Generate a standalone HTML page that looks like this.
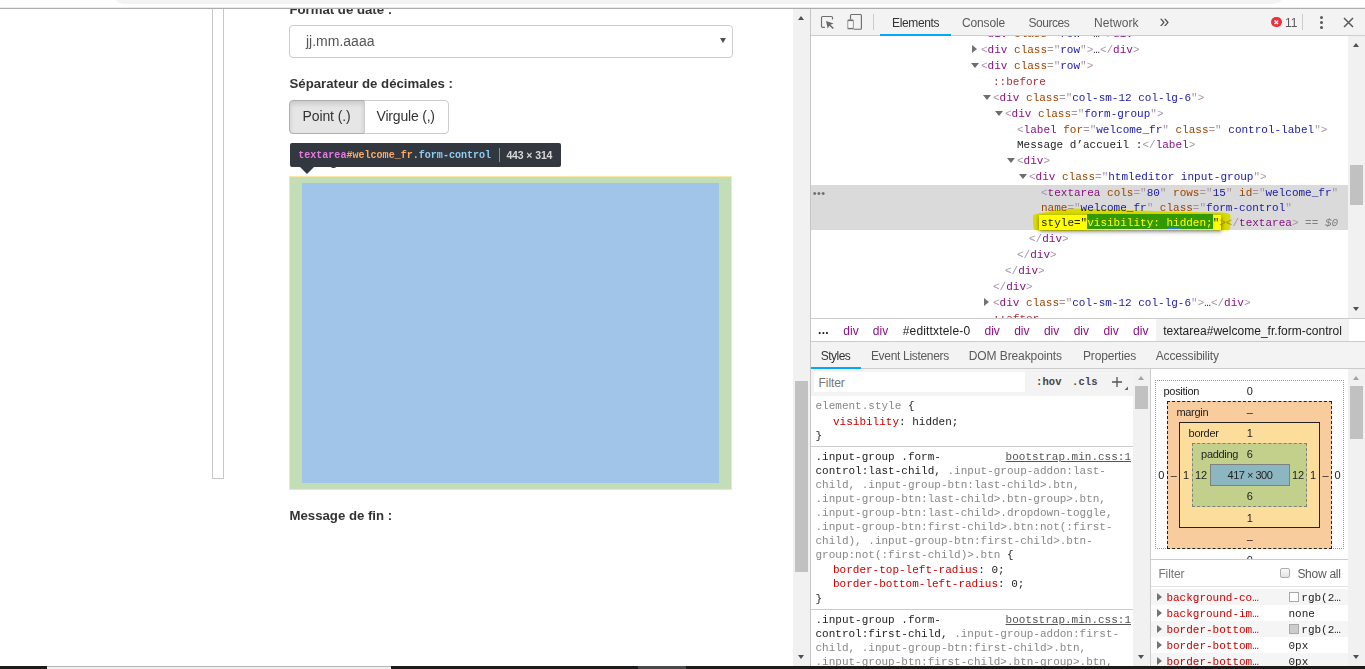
<!DOCTYPE html>
<html lang="fr">
<head>
<meta charset="utf-8">
<title>Message d'accueil</title>
<style>
*{box-sizing:border-box;margin:0;padding:0}
html,body{width:1365px;height:669px;overflow:hidden;background:#fff}
body{position:relative;font-family:"Liberation Sans",sans-serif;font-size:12px;color:#333}
.a{position:absolute}
.mono{font-family:"Liberation Mono",monospace;font-size:11px;white-space:pre}
.ui{font-family:"Liberation Sans",sans-serif;font-size:12px;color:#333;white-space:pre}
/* ---------- left page ---------- */
.lbl{font-weight:bold;font-size:13.2px;color:#333;white-space:pre;line-height:16px}
/* ---------- elements tree ---------- */
.row{position:absolute;left:811px;width:538px;height:16px;line-height:16px}
.row span.t{position:absolute;top:1px}
.tg{color:#a894a6}.tn{color:#881280}.an{color:#994500}.av{color:#1a1aa6}.ps{color:#a8323a}.tx{color:#222}
.arr{position:absolute;width:0;height:0}
.ar{border-left:5px solid #727272;border-top:4px solid transparent;border-bottom:4px solid transparent}
.ad{border-top:5.6px solid #6e6e6e;border-left:4px solid transparent;border-right:4px solid transparent;margin:1px 0 0 -0.5px}
/* ---------- styles pane ---------- */
.sel{color:#222}.dim{color:#888}.prop{color:#c80000}.val{color:#222}
.sl{position:absolute;left:815px;line-height:14px;height:14px}
</style>
</head>
<body>

<!-- ===== left page ===== -->
<div class="a" style="left:211.5px;top:9px;width:12.5px;height:470px;border:1px solid #c8c8c8;border-top:0"></div>

<div class="a lbl" style="left:289.5px;top:2px">Format de date :</div>
<div class="a" style="left:289px;top:25px;width:444px;height:33px;border:1px solid #ccc;border-radius:4px;background:#fff"></div>
<div class="a" style="left:306px;top:33px;font-size:14px;line-height:16px;color:#555;white-space:pre">jj.mm.aaaa</div>
<div class="a arr" style="left:719.6px;top:38.1px;border-top:5.6px solid #505050;border-left:3.4px solid transparent;border-right:3.4px solid transparent"></div>

<div class="a lbl" style="left:289.5px;top:76px">Séparateur de décimales :</div>

<div class="a" style="left:289px;top:100px;width:76px;height:34px;border:1px solid #adadad;border-radius:4px 0 0 4px;background:#e6e6e6;box-shadow:inset 0 3px 5px rgba(0,0,0,.125)"></div>
<div class="a" style="left:364px;top:100px;width:85px;height:34px;border:1px solid #ccc;border-radius:0 4px 4px 0;background:#fff"></div>
<div class="a" style="left:302.5px;top:108px;font-size:14px;line-height:16px;color:#333;white-space:pre;letter-spacing:-0.1px">Point (.)</div>
<div class="a" style="left:376.5px;top:108px;font-size:14px;line-height:16px;color:#333;white-space:pre;letter-spacing:-0.19px">Virgule (,)</div>

<!-- hidden label peeking under tooltip -->
<div class="a lbl" style="left:289.5px;top:153px;color:#333">Message d’accueil :</div>

<!-- inspector highlight -->
<div class="a" style="left:289px;top:176px;width:443px;height:314px;background:#c3deb7;border:1px solid #f8e7a5"></div>
<div class="a" style="left:302px;top:183px;width:417px;height:300px;background:#a0c5e8"></div>

<!-- tooltip -->
<div class="a" style="left:290px;top:143px;width:271px;height:23.5px;background:#333740;border-radius:2px"></div>
<div class="a arr" style="left:298.7px;top:166px;border-top:8.3px solid #333740;border-left:8px solid transparent;border-right:8px solid transparent"></div>
<div class="a mono" style="left:298.2px;top:148px;line-height:15px;font-weight:bold;font-size:10.05px"><span style="color:#e878e2">textarea</span><span style="color:#f9ab66">#welcome_fr</span><span style="color:#8ccff2">.form-control</span></div>
<div class="a" style="left:499px;top:148px;width:1px;height:14px;background:#8a8d93"></div>
<div class="a" style="left:506.4px;top:148px;line-height:15px;font-size:10.5px;font-weight:bold;color:#d8d8d8;white-space:pre;letter-spacing:-0.12px">443 × 314</div>

<div class="a lbl" style="left:289.5px;top:508px">Message de fin :</div>

<!-- ===== browser chrome remnants ===== -->
<div class="a" style="left:0;top:0;width:1365px;height:8px;background:#fff"></div>
<div class="a" style="left:111px;top:-20px;width:1175px;height:24px;background:#f1f3f4;border-radius:0 0 14px 14px"></div>
<div class="a" style="left:0;top:7px;width:1365px;height:2px;background:linear-gradient(#ececec,#ececec 50%,#adadad 50%)"></div>

<!-- page scrollbar -->
<div class="a" style="left:793px;top:9px;width:17px;height:657px;background:#f1f1f1"></div>
<div class="a" style="left:795px;top:381px;width:13px;height:191px;background:#c1c1c1"></div>
<div class="a arr" style="left:797.9px;top:16px;border-bottom:4px solid #505050;border-left:3.6px solid transparent;border-right:3.6px solid transparent"></div>
<div class="a arr" style="left:797.9px;top:654.5px;border-top:4px solid #505050;border-left:3.6px solid transparent;border-right:3.6px solid transparent"></div>

<!-- ===== devtools frame ===== -->
<div class="a" style="left:810px;top:9px;width:1px;height:657px;background:#c6c6c6"></div>
<div class="a" style="left:811px;top:9px;width:554px;height:27px;background:#f3f3f3;border-bottom:1px solid #cdcdcd"></div>

<!-- ===== devtools toolbar ===== -->
<svg class="a" style="left:815px;top:10px" width="60" height="24" viewBox="815 10 60 24"><path d="M832.5 19.6V17.6Q832.5 16.5 831.4 16.5H822.6Q821.5 16.5 821.5 17.6V26.3Q821.5 27.4 822.6 27.4H824.9" fill="none" stroke="#6e6e6e" stroke-width="1.15"/><path d="M826 21.1L833.6 23.4L830.4 24.8L833.9 28.1L832.8 29.1L829.4 25.8L827.7 28.6Z" fill="#6a6a6a"/><path d="M850.5 19.6V15.5Q850.5 14.5 851.5 14.5H860.4Q861.4 14.5 861.4 15.5V28.2Q861.4 29.2 860.4 29.2H853.6" fill="none" stroke="#6e6e6e" stroke-width="1.15"/><rect x="847.5" y="19.6" width="6.1" height="9.7" rx="0.9" fill="#6e6e6e"/><rect x="848.2" y="21.1" width="4.7" height="6.8" fill="#f8f8f8"/></svg>
<div class="a" style="left:873px;top:14px;width:1px;height:16px;background:#ccc"></div>
<div class="a ui" style="left:892px;top:15px;line-height:16px;letter-spacing:-0.35px">Elements</div>
<div class="a" style="left:880px;top:34px;width:71px;height:2px;background:#03a9f4"></div>
<div class="a ui" style="left:962px;top:15px;line-height:16px;letter-spacing:-0.13px;color:#5a5a5a">Console</div>
<div class="a ui" style="left:1028.5px;top:15px;line-height:16px;letter-spacing:-0.45px;color:#5a5a5a">Sources</div>
<div class="a ui" style="left:1094px;top:15px;line-height:16px;letter-spacing:0.08px;color:#5a5a5a">Network</div>
<div class="a ui" style="left:1159.5px;top:12.5px;line-height:16px;font-size:17.5px;color:#555">»</div>
<div class="a" style="left:1271px;top:16.7px;width:10.6px;height:10.6px;border-radius:6px;background:#e8333f"></div>
<svg class="a" style="left:1271px;top:16.7px" width="10.6" height="10.6" viewBox="0 0 12 12"><path d="M4 4L8 8M8 4L4 8" stroke="#fff" stroke-width="1.7"/></svg>
<div class="a ui" style="left:1285px;top:15px;line-height:16px;color:#5a5a5a">11</div>
<div class="a" style="left:1302px;top:14px;width:1px;height:16px;background:#ccc"></div>
<div class="a" style="left:1319.5px;top:16px;width:3px;height:3px;border-radius:2px;background:#5a5a5a;box-shadow:0 5px 0 #5a5a5a,0 10px 0 #5a5a5a"></div>
<svg class="a" style="left:1343px;top:17px" width="11" height="11" viewBox="0 0 11 11"><path d="M1 1L10 10M10 1L1 10" stroke="#5a5a5a" stroke-width="1.5"/></svg>


<!-- ===== elements tree ===== -->
<div class="a" style="left:811px;top:36px;width:554px;height:284px;overflow:hidden;background:#fff"><div style="position:absolute;left:-811px;top:-36px;width:1365px;height:400px">
<div class="a" style="left:811px;top:185px;width:538px;height:45px;background:#dadada"></div>
<div class="a" style="left:1038.5px;top:214.5px;width:182.5px;height:15px;background:#fff;box-shadow:0 1px 3px rgba(0,0,0,.35),1px 2px 5px rgba(0,0,0,.25)"></div>
<div class="a" style="left:1087px;top:214.2px;width:126px;height:15px;background:#3399ff"></div>
<div class="a ui" style="left:812.8px;top:185px;line-height:16px;color:#6e6e6e;letter-spacing:0.35px;font-size:11px">•••</div>
<div class="row mono" style="top:25px"><span class="t" style="left:170px"><span class="tg">&lt;</span><span class="tn">div</span> <span class="an">class</span><span class="tg">="</span><span class="av">row</span><span class="tg">"</span><span class="tg">&gt;</span><span class="tx">…</span><span class="tg">&lt;/</span><span class="tn">div</span><span class="tg">&gt;</span></span></div>
<div class="row mono" style="top:41px"><i class="arr ar" style="left:161px;top:4px"></i><span class="t" style="left:170px"><span class="tg">&lt;</span><span class="tn">div</span> <span class="an">class</span><span class="tg">="</span><span class="av">row</span><span class="tg">"</span><span class="tg">&gt;</span><span class="tx">…</span><span class="tg">&lt;/</span><span class="tn">div</span><span class="tg">&gt;</span></span></div>
<div class="row mono" style="top:57px"><i class="arr ad" style="left:160px;top:5px"></i><span class="t" style="left:170px"><span class="tg">&lt;</span><span class="tn">div</span> <span class="an">class</span><span class="tg">="</span><span class="av">row</span><span class="tg">"</span><span class="tg">&gt;</span></span></div>
<div class="row mono" style="top:73px"><span class="t" style="left:182px"><span class="ps">::before</span></span></div>
<div class="row mono" style="top:89px"><i class="arr ad" style="left:172px;top:5px"></i><span class="t" style="left:182px"><span class="tg">&lt;</span><span class="tn">div</span> <span class="an">class</span><span class="tg">="</span><span class="av">col-sm-12 col-lg-6</span><span class="tg">"</span><span class="tg">&gt;</span></span></div>
<div class="row mono" style="top:105px"><i class="arr ad" style="left:184px;top:5px"></i><span class="t" style="left:194px"><span class="tg">&lt;</span><span class="tn">div</span> <span class="an">class</span><span class="tg">="</span><span class="av">form-group</span><span class="tg">"</span><span class="tg">&gt;</span></span></div>
<div class="row mono" style="top:121px"><span class="t" style="left:206px"><span class="tg">&lt;</span><span class="tn">label</span> <span class="an">for</span><span class="tg">="</span><span class="av">welcome_fr</span><span class="tg">"</span> <span class="an">class</span><span class="tg">="</span><span class="av"> control-label</span><span class="tg">"</span><span class="tg">&gt;</span></span></div>
<div class="row mono" style="top:136px"><span class="t" style="left:206px"><span class="tx">Message d’accueil :</span><span class="tg">&lt;/</span><span class="tn">label</span><span class="tg">&gt;</span></span></div>
<div class="row mono" style="top:152px"><i class="arr ad" style="left:196px;top:5px"></i><span class="t" style="left:206px"><span class="tg">&lt;</span><span class="tn">div</span><span class="tg">&gt;</span></span></div>
<div class="row mono" style="top:168px"><i class="arr ad" style="left:208px;top:5px"></i><span class="t" style="left:218px"><span class="tg">&lt;</span><span class="tn">div</span> <span class="an">class</span><span class="tg">="</span><span class="av">htmleditor input-group</span><span class="tg">"</span><span class="tg">&gt;</span></span></div>
<div class="row mono" style="top:185px;height:15px;line-height:15px"><span class="t" style="left:230px"><span class="tg">&lt;</span><span class="tn">textarea</span> <span class="an">cols</span><span class="tg">="</span><span class="av">80</span><span class="tg">"</span> <span class="an">rows</span><span class="tg">="</span><span class="av">15</span><span class="tg">"</span> <span class="an">id</span><span class="tg">="</span><span class="av">welcome_fr</span><span class="tg">"</span></span></div>
<div class="row mono" style="top:200px;height:15px;line-height:15px"><span class="t" style="left:230px"><span class="an">name</span><span class="tg">="</span><span class="av">welcome_fr</span><span class="tg">"</span> <span class="an">class</span><span class="tg">="</span><span class="av">form-control</span><span class="tg">"</span></span></div>
<div class="row mono" style="top:215px;height:15px;line-height:15px"><span class="t" style="left:230px"><span style="color:#222">style="</span><span style="color:#fff">visibility: hidden;</span><span style="color:#222">"</span><span class="tg">&gt;&lt;/</span><span class="tn">textarea</span><span class="tg">&gt;</span><span style="color:#808080"> == <i>$0</i></span></span></div>
<div class="row mono" style="top:230px"><span class="t" style="left:218px"><span class="tg">&lt;/</span><span class="tn">div</span><span class="tg">&gt;</span></span></div>
<div class="row mono" style="top:246px"><span class="t" style="left:206px"><span class="tg">&lt;/</span><span class="tn">div</span><span class="tg">&gt;</span></span></div>
<div class="row mono" style="top:262px"><span class="t" style="left:194px"><span class="tg">&lt;/</span><span class="tn">div</span><span class="tg">&gt;</span></span></div>
<div class="row mono" style="top:278px"><span class="t" style="left:182px"><span class="tg">&lt;/</span><span class="tn">div</span><span class="tg">&gt;</span></span></div>
<div class="row mono" style="top:294px"><i class="arr ar" style="left:173px;top:4px"></i><span class="t" style="left:182px"><span class="tg">&lt;</span><span class="tn">div</span> <span class="an">class</span><span class="tg">="</span><span class="av">col-sm-12 col-lg-6</span><span class="tg">"</span><span class="tg">&gt;</span><span class="tx">…</span><span class="tg">&lt;/</span><span class="tn">div</span><span class="tg">&gt;</span></span></div>
<div class="row mono" style="top:310px"><span class="t" style="left:182px"><span class="ps">::after</span></span></div>
</div></div>
<svg class="a" style="left:1025px;top:200px;mix-blend-mode:multiply" width="215" height="40" viewBox="1025 200 215 40"><path d="M1033.2 215 Q1036 213.6 1040 213.2 L1047 212 Q1055 210 1062 209.2 L1075 208.6 L1090 209 L1110 209.6 L1140 210.6 L1170 211.6 L1200 212.2 L1222 212.6 Q1229 212.8 1230.3 215 L1230.6 221 L1230.2 227.5 Q1230 230.2 1227 230.5 L1200 230.3 L1150 230.1 L1100 230.5 L1060 231 L1037 230.6 Q1033.6 230.4 1033.4 227 L1033 220 Z" fill="#ffff00"/></svg>
<div class="a" style="left:1168px;top:228px;width:12px;height:1px;background:#2f7fe6"></div>
<div class="a" style="left:1058px;top:229px;width:10px;height:1px;background:#fdfdf0"></div>
<div class="a" style="left:1117px;top:229px;width:36px;height:1px;background:#fdfdf0"></div>
<!-- tree scrollbar -->
<div class="a" style="left:1348px;top:36px;width:17px;height:283px;background:#f1f1f1"></div>
<div class="a" style="left:1350px;top:165px;width:13px;height:39.6px;background:#c1c1c1"></div>
<div class="a arr" style="left:1352.9px;top:43px;border-bottom:4px solid #505050;border-left:3.6px solid transparent;border-right:3.6px solid transparent"></div>
<div class="a arr" style="left:1352.9px;top:307px;border-top:4px solid #505050;border-left:3.6px solid transparent;border-right:3.6px solid transparent"></div>


<!-- ===== breadcrumbs ===== -->
<div class="a" style="left:811px;top:318px;width:554px;height:24px;background:#fff;border-top:1px solid #ccc;border-bottom:1px solid #ccc"></div>
<div class="a" style="left:1156px;top:319px;width:193px;height:22px;background:#f2f2f2"></div>
<div class="a ui" style="left:818px;top:322px;line-height:16px;font-weight:bold;color:#222;letter-spacing:0.3px">...</div>
<div class="a ui" style="left:843.3px;top:323px;line-height:16px;color:#881280">div</div>
<div class="a ui" style="left:872.8px;top:323px;line-height:16px;color:#881280">div</div>
<div class="a ui" style="left:902.7px;top:323px;line-height:16px;color:#222;letter-spacing:0.17px">#edittxtele-0</div>
<div class="a ui" style="left:984.5px;top:323px;line-height:16px;color:#881280">div</div>
<div class="a ui" style="left:1014.2px;top:323px;line-height:16px;color:#881280">div</div>
<div class="a ui" style="left:1043.9px;top:323px;line-height:16px;color:#881280">div</div>
<div class="a ui" style="left:1073.7px;top:323px;line-height:16px;color:#881280">div</div>
<div class="a ui" style="left:1103.4px;top:323px;line-height:16px;color:#881280">div</div>
<div class="a ui" style="left:1133.1px;top:323px;line-height:16px;color:#881280">div</div>
<div class="a ui" style="left:1163.2px;top:323px;line-height:16px;color:#222;letter-spacing:0.02px">textarea#welcome_fr.form-control</div>


<!-- ===== styles sidebar tabs ===== -->
<div class="a" style="left:811px;top:342px;width:554px;height:27px;background:#f3f3f3;border-bottom:1px solid #ccc"></div>
<div class="a ui" style="left:820.7px;top:348px;line-height:16px;letter-spacing:-0.5px">Styles</div>
<div class="a" style="left:811px;top:367px;width:50px;height:2px;background:#03a9f4"></div>
<div class="a ui" style="left:870.9px;top:348px;line-height:16px;letter-spacing:-0.31px;color:#5a5a5a">Event Listeners</div>
<div class="a ui" style="left:968.8px;top:348px;line-height:16px;letter-spacing:-0.1px;color:#5a5a5a">DOM Breakpoints</div>
<div class="a ui" style="left:1083px;top:348px;line-height:16px;letter-spacing:-0.17px;color:#5a5a5a">Properties</div>
<div class="a ui" style="left:1155.8px;top:348px;line-height:16px;letter-spacing:-0.18px;color:#5a5a5a">Accessibility</div>
<!-- ===== styles pane ===== -->
<div class="a" style="left:811px;top:369px;width:339px;height:297px;background:#fff"></div>
<div class="a" style="left:811px;top:369px;width:322px;height:27px;background:#f3f3f3"></div>
<div class="a" style="left:814px;top:372px;width:211px;height:20px;background:#fff"></div>
<div class="a ui" style="left:818.6px;top:375px;line-height:16px;color:#757575;letter-spacing:-0.1px">Filter</div>
<div class="a mono" style="left:1036px;top:374px;line-height:16px;color:#444;font-weight:bold;font-size:10.5px;letter-spacing:0.1px">:hov</div>
<div class="a mono" style="left:1072px;top:374px;line-height:16px;color:#444;font-weight:bold;font-size:10.5px;letter-spacing:0.1px">.cls</div>
<svg class="a" style="left:1111px;top:376px" width="18" height="16" viewBox="0 0 18 16"><path d="M6 1V11M1 6H11" stroke="#555" stroke-width="1.3" fill="none"/><path d="M17 10.5V14H13.5Z" fill="#666"/></svg>
<div class="sl mono" style="top:398.5px;left:815.5px"><span class="dim">element.style</span> <span class="sel">{</span></div>
<div class="sl mono" style="top:415px;left:833px"><span class="prop">visibility</span><span class="val">: hidden;</span></div>
<div class="sl mono" style="top:428.5px;left:815.5px"><span class="sel">}</span></div>
<div class="a" style="left:811px;top:445.5px;width:322px;height:1px;background:#ccc"></div>
<div class="sl mono" style="top:449.5px;left:815.5px"><span class="sel">.input-group .form-</span></div>
<div class="sl mono" style="top:463.5px;left:815.5px"><span class="sel">control:last-child,</span><span class="dim"> .input-group-addon:last-</span></div>
<div class="sl mono" style="top:477.5px;left:815.5px"><span class="dim">child, .input-group-btn:last-child&gt;.btn,</span></div>
<div class="sl mono" style="top:491.5px;left:815.5px"><span class="dim">.input-group-btn:last-child&gt;.btn-group&gt;.btn,</span></div>
<div class="sl mono" style="top:505.5px;left:815.5px"><span class="dim">.input-group-btn:last-child&gt;.dropdown-toggle,</span></div>
<div class="sl mono" style="top:519.5px;left:815.5px"><span class="dim">.input-group-btn:first-child&gt;.btn:not(:first-</span></div>
<div class="sl mono" style="top:533.5px;left:815.5px"><span class="dim">child), .input-group-btn:first-child&gt;.btn-</span></div>
<div class="sl mono" style="top:547.5px;left:815.5px"><span class="dim">group:not(:first-child)&gt;.btn</span> <span class="sel">{</span></div>
<div class="sl mono" style="top:449.5px;left:auto;right:234px;color:#545454;text-decoration:underline">bootstrap.min.css:1</div>
<div class="sl mono" style="top:563px;left:833px"><span class="prop">border-top-left-radius</span><span class="val">: 0;</span></div>
<div class="sl mono" style="top:577px;left:833px"><span class="prop">border-bottom-left-radius</span><span class="val">: 0;</span></div>
<div class="sl mono" style="top:591.5px;left:815.5px"><span class="sel">}</span></div>
<div class="a" style="left:811px;top:608.5px;width:322px;height:1px;background:#ccc"></div>
<div class="sl mono" style="top:612.5px;left:815.5px"><span class="sel">.input-group .form-</span></div>
<div class="sl mono" style="top:626.5px;left:815.5px"><span class="sel">control:first-child,</span><span class="dim"> .input-group-addon:first-</span></div>
<div class="sl mono" style="top:640.5px;left:815.5px"><span class="dim">child, .input-group-btn:first-child&gt;.btn,</span></div>
<div class="sl mono" style="top:654.5px;left:815.5px"><span class="dim">.input-group-btn:first-child&gt;.btn-group&gt;.btn,</span></div>
<div class="sl mono" style="top:612.5px;left:auto;right:234px;color:#545454;text-decoration:underline">bootstrap.min.css:1</div>
<div class="a" style="left:1133px;top:369px;width:17px;height:297px;background:#f1f1f1"></div>
<div class="a" style="left:1135px;top:386px;width:13px;height:23px;background:#c1c1c1"></div>
<div class="a arr" style="left:1137.9px;top:376px;border-bottom:4px solid #a3a3a3;border-left:3.6px solid transparent;border-right:3.6px solid transparent"></div>
<div class="a arr" style="left:1137.9px;top:654.5px;border-top:4px solid #505050;border-left:3.6px solid transparent;border-right:3.6px solid transparent"></div>
<div class="a" style="left:1150px;top:369px;width:1px;height:297px;background:#ccc"></div>


<!-- ===== computed / box model pane ===== -->
<div class="a" style="left:1151px;top:369px;width:197px;height:297px;background:#fff"></div>
<div class="a" style="left:1151px;top:369px;width:197px;height:190px;overflow:hidden"><div style="position:absolute;left:-1151px;top:-369px;width:1365px;height:669px">
<div class="a" style="left:1155px;top:379.5px;width:188.7px;height:169px;border:1px dotted #9a9a9a"></div>
<div class="a" style="left:1167px;top:401px;width:164.7px;height:148px;background:#f9cc9d;border:1px dashed #222"></div>
<div class="a" style="left:1179px;top:422px;width:141px;height:106px;background:#fddd9b;border:1px solid #222"></div>
<div class="a" style="left:1192px;top:443px;width:115px;height:64px;background:#c3d08b;border:1px dashed #808080"></div>
<div class="a" style="left:1210px;top:464px;width:80px;height:22px;background:#8cb6c0;border:1px solid #808080"></div>
<div class="a ui" style="left:1163.5px;top:384.2px;line-height:14px;font-size:11px;color:#222;letter-spacing:-0.3px">position</div>
<div class="a ui" style="left:1249.7px;top:384.2px;line-height:14px;font-size:11px;color:#222;letter-spacing:0px;transform:translateX(-50%)">0</div>
<div class="a ui" style="left:1176.4px;top:405.3px;line-height:14px;font-size:11px;color:#222;letter-spacing:-0.3px">margin</div>
<div class="a ui" style="left:1249.7px;top:405.3px;line-height:14px;font-size:11px;color:#222;letter-spacing:0px;transform:translateX(-50%)">–</div>
<div class="a ui" style="left:1188.6px;top:426px;line-height:14px;font-size:11px;color:#222;letter-spacing:-0.3px">border</div>
<div class="a ui" style="left:1249.7px;top:426px;line-height:14px;font-size:11px;color:#222;letter-spacing:0px;transform:translateX(-50%)">1</div>
<div class="a ui" style="left:1201.1px;top:447.1px;line-height:14px;font-size:11px;color:#222;letter-spacing:-0.3px">padding</div>
<div class="a ui" style="left:1249.7px;top:447.1px;line-height:14px;font-size:11px;color:#222;letter-spacing:0px;transform:translateX(-50%)">6</div>
<div class="a ui" style="left:1249.9px;top:468.1px;line-height:14px;font-size:11px;color:#222;letter-spacing:-0.5px;transform:translateX(-50%)">417 × 300</div>
<div class="a ui" style="left:1249.7px;top:489.1px;line-height:14px;font-size:11px;color:#222;letter-spacing:0px;transform:translateX(-50%)">6</div>
<div class="a ui" style="left:1249.7px;top:510.5px;line-height:14px;font-size:11px;color:#222;letter-spacing:0px;transform:translateX(-50%)">1</div>
<div class="a ui" style="left:1249.7px;top:531.9px;line-height:14px;font-size:11px;color:#222;letter-spacing:0px;transform:translateX(-50%)">–</div>
<div class="a ui" style="left:1249.7px;top:553px;line-height:14px;font-size:11px;color:#222;letter-spacing:0px;transform:translateX(-50%)">0</div>
<div class="a ui" style="left:1161.4px;top:468.1px;line-height:14px;font-size:11px;color:#222;letter-spacing:0px;transform:translateX(-50%)">0</div>
<div class="a ui" style="left:1173.9px;top:468.1px;line-height:14px;font-size:11px;color:#222;letter-spacing:0px;transform:translateX(-50%)">–</div>
<div class="a ui" style="left:1186px;top:468.1px;line-height:14px;font-size:11px;color:#222;letter-spacing:0px;transform:translateX(-50%)">1</div>
<div class="a ui" style="left:1201.1px;top:468.1px;line-height:14px;font-size:11px;color:#222;letter-spacing:0px;transform:translateX(-50%)">12</div>
<div class="a ui" style="left:1298px;top:468.1px;line-height:14px;font-size:11px;color:#222;letter-spacing:0px;transform:translateX(-50%)">12</div>
<div class="a ui" style="left:1313px;top:468.1px;line-height:14px;font-size:11px;color:#222;letter-spacing:0px;transform:translateX(-50%)">1</div>
<div class="a ui" style="left:1325.6px;top:468.1px;line-height:14px;font-size:11px;color:#222;letter-spacing:0px;transform:translateX(-50%)">–</div>
<div class="a ui" style="left:1337.5px;top:468.1px;line-height:14px;font-size:11px;color:#222;letter-spacing:0px;transform:translateX(-50%)">0</div>
</div></div>
<div class="a" style="left:1151px;top:559px;width:197px;height:1px;background:#ccc"></div>
<div class="a ui" style="left:1158.4px;top:566px;line-height:16px;color:#757575;letter-spacing:-0.1px">Filter</div>
<div class="a" style="left:1279.5px;top:567.5px;width:10.5px;height:10.5px;border:1px solid #adadad;border-radius:2px;background:linear-gradient(#fafafa,#e4e4e4)"></div>
<div class="a ui" style="left:1297.4px;top:566px;line-height:16px;color:#5a5a5a;letter-spacing:-0.27px">Show all</div>
<div class="a" style="left:1151px;top:586px;width:197px;height:1px;background:#e2e2e2"></div>
<div class="a" style="left:1151px;top:589px;width:197px;height:16px;background:#f5f5f5"></div>
<div class="a arr" style="left:1157px;top:593px;border-left:5px solid #727272;border-top:4px solid transparent;border-bottom:4px solid transparent"></div>
<div class="a mono" style="left:1166.4px;top:590px;line-height:16px;color:#c80000">background-co…</div>
<div class="a" style="left:1288.5px;top:592px;width:10px;height:10px;background:#fff;border:1px solid #a9a9a9"></div>
<div class="a mono" style="left:1301.3px;top:590px;line-height:16px;color:#222">rgb(2…</div>
<div class="a arr" style="left:1157px;top:609px;border-left:5px solid #727272;border-top:4px solid transparent;border-bottom:4px solid transparent"></div>
<div class="a mono" style="left:1166.4px;top:606px;line-height:16px;color:#c80000">background-im…</div>
<div class="a mono" style="left:1288.5px;top:606px;line-height:16px;color:#222">none</div>
<div class="a" style="left:1151px;top:621px;width:197px;height:16px;background:#f5f5f5"></div>
<div class="a arr" style="left:1157px;top:625px;border-left:5px solid #727272;border-top:4px solid transparent;border-bottom:4px solid transparent"></div>
<div class="a mono" style="left:1166.4px;top:622px;line-height:16px;color:#c80000">border-bottom…</div>
<div class="a" style="left:1288.5px;top:624px;width:10px;height:10px;background:#ccc;border:1px solid #a9a9a9"></div>
<div class="a mono" style="left:1301.3px;top:622px;line-height:16px;color:#222">rgb(2…</div>
<div class="a arr" style="left:1157px;top:641px;border-left:5px solid #727272;border-top:4px solid transparent;border-bottom:4px solid transparent"></div>
<div class="a mono" style="left:1166.4px;top:638px;line-height:16px;color:#c80000">border-bottom…</div>
<div class="a mono" style="left:1288.5px;top:638px;line-height:16px;color:#222">0px</div>
<div class="a" style="left:1151px;top:653px;width:197px;height:16px;background:#f5f5f5"></div>
<div class="a arr" style="left:1157px;top:657px;border-left:5px solid #727272;border-top:4px solid transparent;border-bottom:4px solid transparent"></div>
<div class="a mono" style="left:1166.4px;top:654px;line-height:16px;color:#c80000">border-bottom…</div>
<div class="a mono" style="left:1288.5px;top:654px;line-height:16px;color:#222">0px</div>
<div class="a" style="left:1348px;top:369px;width:17px;height:297px;background:#f1f1f1"></div>
<div class="a" style="left:1350px;top:386px;width:13px;height:52.5px;background:#c1c1c1"></div>
<div class="a arr" style="left:1352.9px;top:376px;border-bottom:4px solid #a3a3a3;border-left:3.6px solid transparent;border-right:3.6px solid transparent"></div>
<div class="a arr" style="left:1352.9px;top:654.5px;border-top:4px solid #505050;border-left:3.6px solid transparent;border-right:3.6px solid transparent"></div>


<!-- ===== bottom OS strip ===== -->
<div class="a" style="left:0;top:666px;width:1365px;height:3px;background:#1d1b1a"></div>
<div class="a" style="left:47px;top:666px;width:344px;height:3px;background:#f0f0f0;border-top:1px solid #b5b5b5"></div>
<div class="a" style="left:638px;top:666px;width:48px;height:3px;background:#4a4a4a"></div>
</body>
</html>
